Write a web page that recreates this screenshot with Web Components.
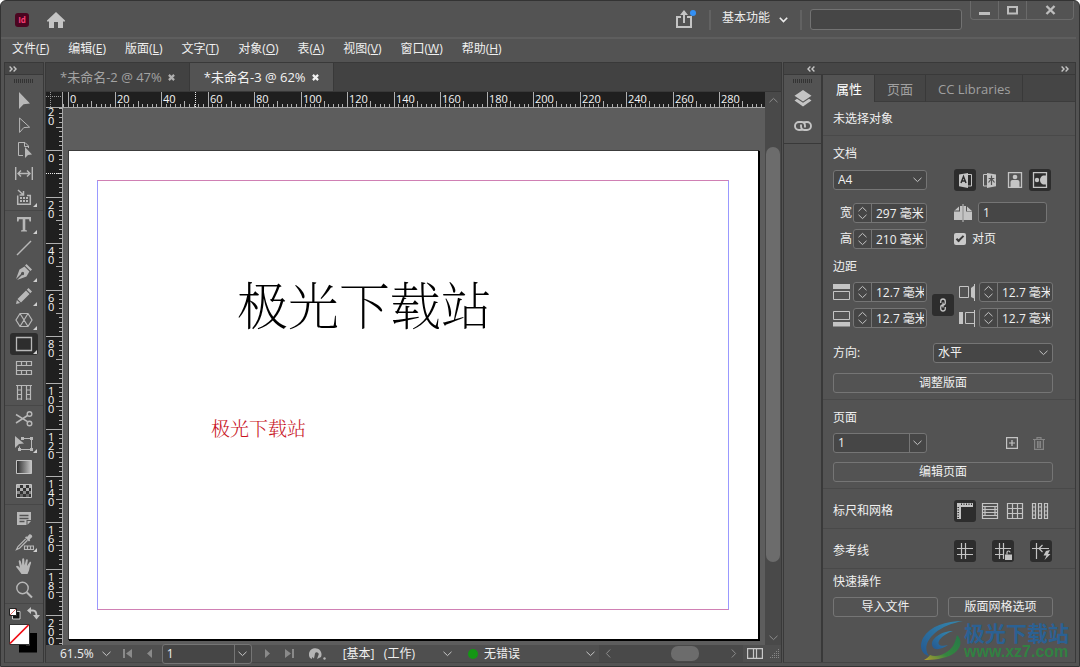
<!DOCTYPE html>
<html lang="zh-CN">
<head>
<meta charset="utf-8">
<title>未命名-3 @ 62%</title>
<style>
html, body { margin: 0; min-height: 100%; background: #fff; }
body {
  font: 12px/16px "Open Sans", "Noto Sans CJK SC", sans-serif;
  color: #f0f0f0;
  --app: #535353; --dark: #424242; --line: #393939; --field: #464646;
  --edge: #757575; --icon: #c4c4c4; --on: #2d2d2d; --ruler: #1f1f1f;
}
</style>
</head>
<body>
<app-window></app-window>
<script>
const BASE = `<style>
*, *::before { box-sizing: border-box; }
button, input, select { font: inherit; color: inherit; margin: 0; border-radius: 0; outline: none; }
button { background: none; border: 0; padding: 0; display: block; }
ui-icon { flex: none; }
</style>`;

function define(name, render) {
  customElements.define(name, class extends HTMLElement {
    constructor() { super(); this.attachShadow({ mode: 'open' }); }
    connectedCallback() {
      const get = (key, other = '') => this.getAttribute(key) ?? other;
      this.shadowRoot.innerHTML = BASE + render(get);
    }
  });
}

/* name: [width, height, markup]; "f" is filled, "s" is stroked */
const ICONS = {
  home: [18, 16, '<path class="f" d="M9 0 18 8.5V9.5H16V16H11V10H7V16H2V9.5H0V8.5Z"/>'],
  share: [22, 18, '<path class="s" stroke-width="2" d="M6 7H2V17H16V7H12"/><path class="f" d="M8 13V5H5L9 0 13 5H10V13Z"/><circle cx="18" cy="3" r="3" fill="#3390f5"/>'],
  down: [9, 6, '<path class="s" d="M.5 .8 4.5 4.6 8.5 .8"/>'],
  downbold: [9, 6, '<path class="s" stroke-width="1.6" d="M.8 .8 4.5 4.6 8.2 .8"/>'],
  up: [9, 6, '<path class="s" d="M.5 5.2 4.5 1.4 8.5 5.2"/>'],
  left: [6, 9, '<path class="s" d="M5.2 .5 1.4 4.5 5.2 8.5"/>'],
  right: [6, 9, '<path class="s" d="M.8 .5 4.6 4.5 .8 8.5"/>'],
  min: [11, 12, '<path class="f" d="M0 8H11V11H0Z"/>'],
  max: [11, 9, '<path class="s" stroke-width="2" d="M1 1H10V7.5H1Z"/>'],
  close: [11, 10, '<path class="s" stroke-width="2.4" d="M1.5 1 9.5 9M9.5 1 1.5 9"/>'],
  x: [7, 7, '<path class="s" stroke-width="2.2" d="M.9 .9 6.1 6.1M6.1 .9 .9 6.1"/>'],
  ffwd: [8, 6, '<path class="s" stroke-width="1.4" d="M.6 .6 3 3 .6 5.4M4.6 .6 7 3 4.6 5.4"/>'],
  rew: [8, 6, '<path class="s" stroke-width="1.4" d="M3.4 .6 1 3 3.4 5.4M7.4 .6 5 3 7.4 5.4"/>'],
  grip: [20, 4, '<path class="s" style="stroke:#333" d="M.5 0V4M2.5 0V4M4.5 0V4M6.5 0V4M8.5 0V4M10.5 0V4M12.5 0V4M14.5 0V4M16.5 0V4M18.5 0V4"/>'],
  select: [20, 20, '<path class="f" d="M5 1V18L9.6 13.2 16 12.6Z"/>'],
  direct: [20, 20, '<path class="s" d="M5.6 3V17.4L9.8 12.6 15.6 12.2Z"/>'],
  pagetool: [20, 20, '<path class="s" d="M9 16.5H4.5V3.5H11L14.5 7V9M10.5 3.5V7.5H14.5"/><path class="f" d="M11 8V19L14 16 18 15.4Z"/>'],
  gap: [20, 20, '<path class="s" stroke-width="1.4" d="M1.7 4V17M18.3 4V17M4 10.5H16M7 7.5 4 10.5 7 13.5M13 7.5 16 10.5 13 13.5"/>'],
  collect: [20, 20, '<path class="s" stroke-width="1.5" d="M3.7 8.5V17.2H16.3V8.5H13M4 3 9 7.5M9.5 4V8H5.5"/><path class="f" d="M6 10h2v2H6zM9 10h2v2H9zM12 10h2v2h-2zM6 13h2v2H6zM9 13h2v2H9zM12 13h2v2h-2z"/>'],
  type: [20, 20, '<path class="f" d="M3 3H17V7.5H15.5L15 5.2H11.3V16L13 16.6V17.5H7V16.6L8.7 16V5.2H5L4.500 7.500H3Z"/>'],
  line: [20, 20, '<path class="s" stroke-width="1.5" d="M3 17 17 3"/>'],
  pen: [20, 20, '<path class="f" d="M12.5 2 18 7.500 16.500 9 11 3.500ZM10.500 4.600 15.400 9.500 12.500 14.500 3 18 8 13A1.600 1.600 0 1 0 7 12L2 17 5.500 7.500Z"/>'],
  pencil: [20, 20, '<path class="f" d="M14.500 2 18 5.500 16.300 7.200 12.800 3.700ZM12 4.500 15.500 8 7 16.500 3.500 13ZM2.900 13.900 6.100 17.100 2 18Z"/>'],
  poly: [20, 20, '<path class="s" stroke-width="1.2" d="M6 3.500H14L18 10 14 16.500H6L2 10ZM6 3.500 14 16.500M14 3.500 6 16.500"/>'],
  rect: [20, 20, '<path class="s" stroke-width="1.3" d="M2.500 3.500H17.500V16.500H2.500Z"/>'],
  hgrid: [20, 20, '<path class="s" stroke-width="1.2" d="M2 3.500H18M2 7.500H18M2 12.500H18M2 16.500H18M2.500 3V17M7.500 3V7.500M12.500 3V7.500M17.500 3V7.500M7.500 12.500V17M12.500 12.500V17M17.500 12.500V17"/>'],
  vgrid: [20, 20, '<path class="s" stroke-width="1.2" d="M2 3.500H18M3.500 3V18M7.500 3V18M12.500 3V18M16.500 3V18M3.500 8H7.500M3.500 12.500H7.500M3.500 17H7.500M12.500 8H16.500M12.500 12.500H16.500M12.500 17H16.500"/>'],
  cut: [20, 20, '<path class="s" stroke-width="1.5" d="M2 5.500 13.500 12.600M2 14 13.500 6.500"/><circle class="s" stroke-width="1.400" cx="15.500" cy="5" r="2.300"/><circle class="s" stroke-width="1.400" cx="15.500" cy="14.500" r="2.300"/>'],
  transform: [22, 20, '<path class="f" d="M2 3V15L6 11 11 10.500Z"/><path class="s" d="M9 5.500H18.500V16.500H6.500V13.500"/><path class="f" d="M17 4h3v3h-3zM17 15h3v3h-3zM5 15h3v3H5zM8 4h3v3H8z"/>'],
  gradient: [20, 20, '<defs><linearGradient id="g"><stop offset="0" stop-color="#2b2b2b"/><stop offset="1" stop-color="#c8c8c8"/></linearGradient></defs><path fill="url(#g)" stroke="#c4c4c4" d="M2.500 3.500H17.500V16.500H2.500Z"/>'],
  feather: [20, 20, '<path fill="#333" stroke="#c4c4c4" d="M2.500 3.500H17.500V16.500H2.500Z"/><path fill="#b0b0b0" d="M3 4h3v3H3zM9 4h3v3H9zM15 4h2v3h-2zM6 7h3v3H6zM12 7h3v3h-3z"/><path fill="#8a8a8a" d="M3 10h3v3H3zM9 10h3v3H9zM15 10h2v3h-2z"/><path fill="#666" d="M6 13h3v3H6zM12 13h3v3h-3z"/>'],
  note: [20, 20, '<path class="f" d="M3 4H17V12H12.500V17H3ZM13.500 13H17L13.500 16.700Z"/><path stroke="#535353" stroke-width="1.300" d="M5.500 7.500H14.500M5.500 10.500H14.500M5.500 13.500H10.500"/>'],
  dropper: [20, 20, '<path class="f" d="M11 5.500 12.300 4.200 13 4.900 15.500 2.300A2.300 2.300 0 0 1 18.200 5L15.600 7.500 16.300 8.200 15 9.500Z"/><path class="s" stroke-width="1.200" d="M11.700 6.800 4 14.500 2.500 17.500 5.500 16.200 13.500 8.300M10.500 14H19.500V17.500H10.500ZM13.500 14V17.500M16.500 14V17.500"/>'],
  hand: [20, 20, '<path class="f" d="M7.500 18C5.500 15.500 4 13 2 10.800 2.500 9.300 4 9.500 6 12L4.700 5.500C4.800 4 6.300 4 6.700 5.300L8 9.500 8.200 3.200C8.500 2 10 2 10.200 3.200L10.600 9.300 12 3.800C12.500 2.700 13.900 3 13.800 4.300L13 10 15.500 6.200C16.400 5.300 17.500 6 17 7.300 16 10 15.500 12.500 15 14.500L13.500 18Z"/>'],
  zoom: [20, 20, '<circle class="s" stroke-width="1.400" cx="8.500" cy="8" r="5.700"/><path class="s" stroke-width="2" d="M12.700 12.200 18 17.500"/>'],
  defaults: [13, 13, '<path fill="#111" d="M5 5H12V12H5Z"/><path fill="none" stroke="#eee" stroke-width=".8" d="M4.500 4.500H12V12H4.500Z"/><path fill="#fff" stroke="#222" d="M1.500 1.500H8.500V8.500H1.500Z"/><path stroke="#d66" d="M2 8 8 2"/>'],
  swap: [13, 13, '<path class="s" stroke-width="1.800" d="M3 3.500H6C8.500 3.500 9.500 5 9.500 9"/><path class="f" d="M4 0V7L0 3.500ZM6 8H13L9.500 12.500Z"/>'],
  swatch: [30, 34, '<path fill="none" stroke="#000" stroke-width="7" d="M13.500 12.500H24.500V25H13.500Z"/><path fill="#fff" stroke="#333" d="M.5 .5H20.500V20.500H.5Z"/><path stroke="#f00a12" stroke-width="1.700" d="M1 19.500 19.500 1"/>'],
  layers: [18, 17, '<path class="f" d="M9 0 17.500 5.700 9 11.400 .5 5.700ZM.5 10.500 3 8.800 9 12.800 15 8.800 17.500 10.500 9 16.500Z"/>'],
  cc: [20, 12, '<path class="s" stroke-width="1.900" d="M10.500 9.300Q9.500 10 6 10A4 4 0 0 1 6 2H8.500Q12 2 12 6V7.500M9.500 2.700Q10.500 2 14 2A4 4 0 0 1 14 10H11.500Q8 10 8 6V4.500"/>'],
  ltr: [22, 22, '<path class="f" d="M5 5.500 14 4V19L5 17.200Z"/><path class="s" d="M14 5.500H17.500V17H14"/><path fill="none" stroke="#2d2d2d" stroke-width="1.500" d="M7 14 9.500 7.500 12 14M8 12H11"/>'],
  rtl: [22, 22, '<path class="s" d="M8 5.500H4.500V17H8"/><path class="f" d="M8 4 17 5.500V17.200L8 19Z"/><path stroke="#535353" stroke-width="1.200" d="M12.500 6.500V16M9.700 9.500H15.300M12.500 9.500 9.500 13.500M12.500 9.500 15.500 13.500"/>'],
  portrait: [22, 22, '<path class="s" stroke-width="1.300" d="M4.500 3.700H17.500V18.300H4.500Z"/><circle class="f" cx="11" cy="8" r="2.300"/><path class="f" d="M6.500 18V13Q6.500 11 8.500 11H13.500Q15.500 11 15.500 13V18Z"/>'],
  landscape: [22, 22, '<path class="s" stroke-width="1.300" d="M4.500 3.700H17.500V18.300H4.500Z"/><circle class="f" cx="8" cy="11" r="2.200"/><path class="f" d="M17 6.500H14Q11 8 11 11T14 15.500H17Z"/>'],
  spread: [18, 18, '<path class="f" d="M0 7 5 2.500V6.500H0M6 2H8.500V16H0V7.500H6ZM9.500 2H12V7.500H18V16H9.500ZM13 2.500 18 7H13Z"/><path class="s" d="M9 0V18"/>'],
  mtop: [17, 17, '<path class="f" d="M0 0H17V5H0Z"/><path class="s" d="M.5 7.500H16.500V15.500H.5Z"/>'],
  mbottom: [17, 17, '<path class="f" d="M0 12H17V16.500H0Z"/><path class="s" d="M.5 1.500H16.500V9.500H.5Z"/>'],
  mright: [17, 17, '<path class="s" d="M.5 2.500H9.500V13.500H.5ZM15.500 0V17"/><path class="f" d="M12 4 16 1V15L12 13Z"/>'],
  mleft: [17, 17, '<path class="f" d="M0 2H4V14H0Z"/><path class="s" d="M6.500 2.500H15.500V13.500H6.500ZM15.500 0V17"/>'],
  chain: [22, 22, '<path class="s" stroke-width="1.300" d="M8.700 9V7.500Q8.700 5 11 5T13.300 7.500V8.500Q13.300 11 11 11M11 8.500V13.500M11 11Q8.700 11 8.700 13.500V14.500Q8.700 17 11 17T13.300 14.500V13"/>'],
  addpage: [12, 12, '<path class="s" stroke-width="1.200" d="M.6 .6H11.400V11.400H.6ZM6 3V9M3 6H9"/>'],
  trash: [12, 13, '<path class="s" style="stroke:#858585" stroke-width="1.200" d="M0 2.500H12M4 2V.6H8V2M1.600 2.500V12.400H10.400V2.500M4.500 4V11M7.500 4V11M6 4V11"/>'],
  rulers: [22, 22, '<path class="f" d="M3 3H19V7H7V19H3Z"/><path stroke="#2d2d2d" d="M7.500 3.500V5M10 3.500V5M12.500 3.500V5M15 3.500V5M17.500 3.500V5M3.500 7.500H5M3.500 10H5M3.500 12.500H5M3.500 15H5M3.500 17.500H5"/>'],
  baseline: [22, 22, '<path class="s" stroke-width="1.200" d="M3.500 3.500H18.500V18.500H3.500ZM3 6.500H19M3 9.500H19M3 12.500H19M3 15.500H19M6 6.500V15.500M16 6.500V15.500"/>'],
  docgrid: [22, 22, '<path class="s" stroke-width="1.200" d="M3.500 3.500H18.500V18.500H3.500ZM3 8.500H19M3 13.500H19M8.500 3V19M13.500 3V19"/>'],
  layout: [22, 22, '<path class="s" stroke-width="1.200" d="M3.500 3.500H6.500V18.500H3.500ZM9.500 3.500H12.500V18.500H9.500ZM15.500 3.500H18.500V18.500H15.500ZM3.500 7H6.500M3.500 11H6.500M3.500 15H6.500M9.500 7H12.500M9.500 11H12.500M9.500 15H12.500M15.500 7H18.500M15.500 11H18.500M15.500 15H18.500"/>'],
  guides: [22, 22, '<path class="s" stroke-width="1.200" d="M3 8.500H19M3 14.500H19M7.500 3V19M11.500 3V19"/>'],
  lockguides: [22, 22, '<path class="s" stroke-width="1.200" d="M3 8.500H19M3 14.500H12M7.500 3V19M11.500 3V19M15 14.500V12.500Q15 11 16.500 11T18 12.500"/><path class="f" d="M13 14.500H20V20H13Z"/>'],
  smart: [22, 22, '<path class="s" stroke-width="1.200" d="M2 8.500H19M6.500 3V19M12.500 5 9 8.500 12.500 12"/><path class="f" d="M16 11 20 10 18 14H20.500L14.500 20 16.500 15.500H13.500Z"/>'],
  first: [9, 9, '<path class="f" d="M0 0H2V9H0ZM9 0V9L3 4.500Z"/>'],
  prev: [5, 9, '<path class="f" d="M5 0V9L0 4.500Z"/>'],
  next: [5, 9, '<path class="f" d="M0 0V9L5 4.500Z"/>'],
  last: [9, 9, '<path class="f" d="M7 0H9V9H7ZM0 0V9L6 4.500Z"/>'],
  preflight: [17, 13, '<path class="f" d="M1 11A6.300 6.300 0 1 1 12 10L8 12 9.500 8A1.800 1.800 0 1 0 6 6.500L5 11.500 3 10V12Z"/><circle class="f" cx="15.500" cy="11.500" r="1.200"/>'],
  split: [16, 11, '<path class="s" stroke-width="1.200" d="M.6 .6H15.400V10.400H.6ZM6.500 .6V10.400M9.500 .6V10.400"/>'],
  size: [10, 10, '<path fill="#888" d="M8 0h1v1H8zM6 2h1v1H6zM8 2h1v1H8zM4 4h1v1H4zM6 4h1v1H6zM8 4h1v1H8zM2 6h1v1H2zM4 6h1v1H4zM6 6h1v1H6zM8 6h1v1H8zM0 8h1v1H0zM2 8h1v1H2zM4 8h1v1H4zM6 8h1v1H6zM8 8h1v1H8z"/>'],
};

define('ui-icon', get => {
  const [w, h, body] = ICONS[get('name')];
  return `<style>:host { display: block; width: ${w}px; height: ${h}px; color: var(--tint, var(--icon)); }
    svg { display: block; } .f { fill: currentColor; } .s { fill: none; stroke: currentColor; }</style>
    <svg width="${w}" height="${h}" viewBox="0 0 ${w} ${h}" aria-hidden="true">${body}</svg>`;
});

define('ui-button', () => `<style>
  :host { display: block; flex: 1; }
  button { width: 100%; height: 20px; border: 1px solid var(--edge); border-radius: 3px; line-height: 18px; }
  </style><button type="button"><slot></slot></button>`);

define('icon-button', get => `<style>
  :host { display: block; }
  button { width: 22px; height: 22px; border-radius: 3px; display: grid; place-items: center; }
  button[aria-pressed=true] { background: var(--on); }
  </style><button type="button" aria-label="${get('label')}" aria-pressed="${get('on', null) !== null}"><ui-icon name="${get('name')}"></ui-icon></button>`);

define('ui-select', get => `<style>
  :host { display: flex; align-items: center; justify-content: space-between; }
  .box { display: grid; width: var(--w, 94px); align-items: center; }
  select, ui-icon { grid-area: 1 / 1; }
  select { appearance: none; width: 100%; height: 20px; padding: 0 20px 0 4px; background: var(--field);
    border: 1px solid var(--edge); border-radius: 3px; }
  ui-icon { justify-self: end; margin-right: 5px; pointer-events: none; }
  .split { justify-self: end; grid-area: 1 / 1; width: 18px; height: 20px; border-left: 1px solid var(--edge); pointer-events: none; }
  </style>
  ${get('label') ? `<label for="s">${get('label')}</label>` : ''}
  <span class="box"><select id="s" aria-label="${get('label') || get('hint')}">${get('options').split('|').map(o => `<option>${o}</option>`).join('')}</select>
  ${get('split', null) !== null ? '<span class="split"></span>' : ''}<ui-icon name="down"></ui-icon></span>`);

define('ui-spin', get => `<style>
  :host { display: flex; align-items: center; justify-content: space-between; width: 94px; }
  label { display: flex; justify-content: flex-end; width: 19px; }
  :host([icon]) label { justify-content: flex-start; }
  .box { display: flex; width: 74px; height: 20px; border: 1px solid var(--edge); border-radius: 3px; background: var(--field); }
  .steps { width: 18px; flex: none; border-right: 1px solid var(--edge); display: flex; flex-direction: column; align-items: center; justify-content: space-between; padding: 2px 0; }
  input { flex: 1; min-width: 0; width: 0; border: 0; background: none; padding: 0 2px 0 4px; height: 18px; }
  </style>
  <label for="i">${get('icon') ? `<ui-icon name="${get('icon')}"></ui-icon>` : get('label')}</label>
  <span class="box"><span class="steps"><button type="button" tabindex="-1" aria-label="增加"><ui-icon name="up"></ui-icon></button><button type="button" tabindex="-1" aria-label="减少"><ui-icon name="down"></ui-icon></button></span>
  <input id="i" type="text" aria-label="${get('label')}" value="${get('value')}"></span>`);

define('title-bar', () => `<style>
  :host { display: flex; align-items: flex-start; height: 38px; padding: 0 2px 0 14px; border-bottom: 2px solid #5e5e5e; margin-right: 3px; }
  .logo { margin-top: 12px; width: 14px; height: 14px; border-radius: 3px; background: #4b0520; color: #f43c72; font-weight: 700; font-size: 8px; line-height: 13px; text-align: center; }
  .home { margin: 11px auto 0 18px; }
  .share { margin: 9px 12px 0 0; }
  i { width: 2px; height: 20px; margin-top: 9px; background: #626262; }
  .space { display: flex; align-items: center; gap: 9px; margin: 7px 12px 0 11px; height: 20px; --tint: #ececec; color: #ececec; }
  .space ui-icon { margin-top: 4px; }
  input { width: 152px; height: 21px; margin: 8px 8px 0 8px; background: var(--field); border: 1px solid #727272; border-radius: 3px; }
  .win { display: flex; height: 19px; border: 1px solid #6a6a6a; border-top: 0; border-radius: 0 0 4px 4px; --tint: #bdbdbd; }
  .win button { width: 28px; display: grid; place-items: center; border-right: 1px solid #6a6a6a; }
  .win button:last-child { width: 46px; border: 0; }
  </style>
  <span class="logo">Id</span>
  <button class="home" aria-label="主页"><ui-icon name="home"></ui-icon></button>
  <button class="share" aria-label="共享"><ui-icon name="share"></ui-icon></button>
  <i></i>
  <button class="space"><span>基本功能</span><ui-icon name="downbold"></ui-icon></button>
  <i></i>
  <input type="search" aria-label="搜索">
  <span class="win"><button aria-label="最小化"><ui-icon name="min"></ui-icon></button><button aria-label="最大化"><ui-icon name="max"></ui-icon></button><button aria-label="关闭"><ui-icon name="close"></ui-icon></button></span>`);

define('menu-bar', () => `<style>
  :host { display: block; height: 23px; }
  nav { display: flex; gap: 19px; padding: 2px 0 0 11px; }
  u { text-underline-offset: 1px; }
  </style><nav>${[['文件', 'F'], ['编辑', 'E'], ['版面', 'L'], ['文字', 'T'], ['对象', 'O'], ['表', 'A'], ['视图', 'V'], ['窗口', 'W'], ['帮助', 'H']]
    .map(([t, k]) => `<button type="button" accesskey="${k.toLowerCase()}">${t}(<u>${k}</u>)</button>`).join('')}</nav>`);

const TOOLS = [
  ['select', 'direct', 'pagetool', 'gap', 'collect*'],
  ['type*', 'line', 'pen*', 'pencil*', 'poly*', 'rect*!', 'hgrid', 'vgrid'],
  ['cut', 'transform*', 'gradient', 'feather'],
  ['note', 'dropper*', 'hand', 'zoom'],
];
define('tool-box', () => `<style>
  :host { display: flex; flex-direction: column; border: 1px solid var(--line); border-bottom-color: #444; background: var(--app); }
  header { height: 12px; background: #464646; border-bottom: 1px solid var(--line); padding: 3px 0 0 4px; box-sizing: border-box; }
  .grip { margin: 4px auto 6px; }
  section { display: flex; flex-direction: column; align-items: center; border-bottom: 1px solid #474747; padding-bottom: 1px; margin-bottom: 1px; }
  section button { position: relative; width: 28px; height: 22px; margin: 1px 0; display: grid; place-items: center; border-radius: 3px; --tint: #b8b8b8; }
  section button.on { background: var(--on); }
  section button.more::before { content: ""; position: absolute; right: 1px; bottom: 1px; border: 2px solid #d0d0d0; border-top-color: transparent; border-left-color: transparent; }
  .row { display: flex; justify-content: center; gap: 6px; height: 17px; padding-top: 2px; }
  .swatch { margin: 2px auto 0 4px; }
  </style>
  <header><ui-icon name="ffwd"></ui-icon></header>
  <ui-icon class="grip" name="grip"></ui-icon>
  ${TOOLS.map(group => `<section>${group.map(t => {
    const n = t.replace(/[*!]/g, '');
    return `<button type="button" aria-label="${n}" class="${t.includes('*') ? 'more' : ''} ${t.includes('!') ? 'on' : ''}"><ui-icon name="${n}"></ui-icon></button>`;
  }).join('')}</section>`).join('')}
  <div class="row"><ui-icon name="defaults"></ui-icon><ui-icon name="swap"></ui-icon></div>
  <ui-icon class="swatch" name="swatch"></ui-icon>`);

/* Rulers: 20 mm between labelled ticks */
const STEP = 46.5;
define('page-ruler', get => {
  const vertical = get('axis') === 'y';
  const origin = Number(get('origin'));
  const size = vertical ? 16 : 15;
  let ticks = '', labels = '';
  for (let mm = -40; mm <= 800; mm += 2) {
    const p = Math.floor(origin + mm * STEP / 20) + .5;
    if (p < 0) continue;
    const len = mm % 20 === 0 ? size : mm % 10 === 0 ? 6 : 3;
    ticks += vertical ? `M${size - len} ${p}H${size}` : `M${p} ${size - len}V${size}`;
  }
  for (let mm = vertical ? -20 : 0; mm <= (vertical ? 200 : 280); mm += 20) {
    const p = Math.floor(origin + mm * STEP / 20);
    const digits = [...String(Math.abs(mm))];
    labels += vertical
      ? `<text x="${digits.map(() => 2).join(' ')}" y="${digits.map((d, i) => p + 12 + i * 9).join(' ')}">${digits.join('')}</text>`
      : `<text x="${p + 2}" y="11">${mm}</text>`;
  }
  const m = get('mark');
  return `<style>
    :host { display: block; background: var(--ruler); overflow: hidden; ${vertical ? 'border-right: 1px solid #a8a8a8; width: 17px' : 'border-bottom: 1px solid #a8a8a8; height: 16px'}; box-sizing: border-box; contain: size; }
    svg { display: block; width: 100%; height: 100%; }
    path { fill: none; stroke: #b0b0b0; shape-rendering: crispEdges; }
    .mark { stroke: #eee; stroke-dasharray: 1 1; }
    text { fill: #f4f4f4; font-size: 11px; }
    </style><svg><path d="${ticks}"/>${labels}<path class="mark" d="${vertical ? `M0 ${m}.5H16` : `M${m}.5 0V15`}"/></svg>`;
});

define('page-canvas', () => `<style>
  :host { display: flex; background: #5d5d5d; padding: 42px 6px 5px 5px; }
  .page { flex: 1; position: relative; display: flex; background: #fff; border: 1px solid #3c3c3c; border-right-color: #000; border-bottom-color: #000; box-shadow: 1px 1px #000; padding: 29px 29px 29px 28px; }
  .guides { flex: 1; border: 1px solid #9999ff; border-top-color: #d080b4; border-bottom-color: #d080b4; }
  .frame { position: absolute; white-space: nowrap; font-family: "Noto Serif CJK SC", "Noto Sans CJK SC", serif; }
  .big { left: 168px; top: 122px; font-size: 51px; line-height: 60px; font-weight: 200; color: #000; }
  .small { left: 142px; top: 265px; font-size: 19px; line-height: 24px; font-weight: 300; color: #c8141e; }
  </style>
  <div class="page"><div class="guides"></div><div class="frame big">极光下载站</div><div class="frame small">极光下载站</div></div>`);

define('status-bar', () => `<style>
  :host { display: flex; align-items: center; height: 17px; background: #4f4f4f; --tint: #c8c8c8; }
  .zoom { display: flex; align-items: center; gap: 8px; margin: 0 12px 0 14px; }
  .nav { display: flex; gap: 15px; --tint: #8a8a8a; }
  ui-select { --w: 90px; margin: 0 13px 0 10px; }
  .pre { margin: 0 17px 0 15px; --tint: #b5b5b5; }
  .profile { margin-right: 28px; white-space: pre; }
  .dot { width: 10px; height: 10px; border-radius: 5px; background: #149614; margin: 0 6px 0 16px; }
  .err { flex: 1; display: flex; align-items: center; justify-content: space-between; padding-right: 4px; white-space: nowrap; }
  .scroll { width: 144px; height: 17px; background: #494949; display: flex; align-items: center; padding: 0 6px; --tint: #8c8c8c; }
  .thumb { width: 28px; height: 15px; border-radius: 7px; background: #6c6c6c; margin: 0 32px 0 auto; }
  .split { margin: 0 7px 0 4px; } .size { margin-right: 1px; }
  </style>
  <button class="zoom"><span>61.5%</span><ui-icon name="down"></ui-icon></button>
  <span class="nav"><button aria-label="首页"><ui-icon name="first"></ui-icon></button><button aria-label="上一页"><ui-icon name="prev"></ui-icon></button></span>
  <ui-select hint="当前页" options="1" split></ui-select>
  <span class="nav"><button aria-label="下一页"><ui-icon name="next"></ui-icon></button><button aria-label="末页"><ui-icon name="last"></ui-icon></button></span>
  <button class="pre" aria-label="打开"><ui-icon name="preflight"></ui-icon></button>
  <span class="profile">[基本]   (工作)</span>
  <button aria-label="印前检查"><ui-icon name="down"></ui-icon></button>
  <span class="dot"></span>
  <button class="err"><span>无错误</span><ui-icon name="down"></ui-icon></button>
  <span class="scroll"><ui-icon name="left"></ui-icon><span class="thumb"></span><ui-icon name="right"></ui-icon></span>
  <ui-icon class="split" name="split"></ui-icon><ui-icon class="size" name="size"></ui-icon>`);

define('document-area', () => `<style>
  :host { display: grid; grid-template: 29px 16px minmax(0, 1fr) 17px / 17px minmax(0, 1fr) 16px; border: 1px solid var(--line); border-bottom-color: #444; background: var(--dark); }
  .tabs { grid-column: 1 / -1; display: flex; border-bottom: 1px solid #383838; font-size: 13px; }
  .tabs button { display: flex; align-items: center; gap: 6px; padding: 0 14px; border-right: 1px solid var(--line); color: #a3a3a3; --tint: #b0b0b0; white-space: nowrap; }
  .tabs button[aria-selected=true] { background: var(--app); color: #f2f2f2; --tint: #f2f2f2; }
  .corner { background: var(--ruler); border: solid #a8a8a8; border-width: 0 1px 1px 0; background-image: linear-gradient(90deg, #999 50%, transparent 0), linear-gradient(#999 50%, transparent 0); background-size: 2px 1px, 1px 2px; background-repeat: repeat-x, repeat-y; background-position: 0 4px, 4px 0; }
  .vscroll { grid-area: 2 / 3 / 4 / 4; background: #494949; display: flex; flex-direction: column; align-items: center; padding: 5px 0 4px; --tint: #8c8c8c; }
  .thumb { width: 14px; height: 415px; border-radius: 7px; background: #6c6c6c; margin: 44px 0 auto; }
  status-bar { grid-column: 1 / -1; }
  </style>
  <div class="tabs" role="tablist"><button role="tab" aria-selected="false"><span>*未命名-2 @ 47%</span><ui-icon name="x"></ui-icon></button><button role="tab" aria-selected="true"><span>*未命名-3 @ 62%</span><ui-icon name="x"></ui-icon></button></div>
  <div class="corner"></div>
  <page-ruler axis="x" origin="5.5" mark="132"></page-ruler>
  <page-ruler axis="y" origin="42.5" mark="65"></page-ruler>
  <page-canvas></page-canvas>
  <div class="vscroll"><ui-icon name="up"></ui-icon><span class="thumb"></span><ui-icon name="down"></ui-icon></div>
  <status-bar></status-bar>`);

define('icon-dock', () => `<style>
  :host { display: flex; flex-direction: column; align-items: center; border-right: 2px solid var(--line); }
  .grip { margin: 4px 0 7px; }
  .group { width: 100%; display: flex; flex-direction: column; align-items: center; border-bottom: 1px solid var(--line); padding-bottom: 11px; }
  .group button + button { margin-top: 13px; }
  </style><div class="group"><ui-icon class="grip" name="grip"></ui-icon>
  <button aria-label="图层"><ui-icon name="layers"></ui-icon></button><button aria-label="链接"><ui-icon name="cc"></ui-icon></button></div>`);

define('properties-panel', () => `<style>
  :host { display: block; }
  .tabs { display: flex; height: 27px; background: #454545; }
  .tabs button { padding: 1px 12px 0; border-right: 1px solid var(--line); border-bottom: 1px solid #3c3c3c; color: #a0a0a0; font-size: 13px; }
  .tabs button[aria-selected=true] { background: var(--app); color: #fff; border-bottom: 0; padding: 0 12px 0 13px; }
  .tabs span { flex: 1; border-bottom: 1px solid #3c3c3c; }
  section { padding: 0 22px 0 10px; border-bottom: 1px solid #494949; display: flex; flex-direction: column; }
  section:last-of-type { border: 0; }
  h3 { font: inherit; margin: 0; }
  .cols { display: grid; grid-template-columns: 1fr 99px; align-items: center; }
  .set { display: flex; gap: 3px; } .set.wide { gap: 16px; }
  .count { display: flex; gap: 6px; align-items: center; }
  .count input { width: 69px; height: 21px; padding: 0 4px; background: var(--field); border: 1px solid var(--edge); border-radius: 3px; }
  .facing { display: flex; gap: 6px; align-items: center; }
  .facing input { appearance: none; width: 12px; height: 12px; background: #cacaca; border-radius: 2px; display: grid; place-items: center; }
  .facing input::before { content: ""; width: 8px; height: 4px; border: solid #3a3a3a; border-width: 0 0 2px 2px; rotate: -45deg; translate: 0 -1px; }
  .margins { display: grid; grid-template-columns: 94px 1fr 94px; row-gap: 6px; align-items: center; justify-items: center; }
  .margins icon-button { grid-area: 1 / 2 / 3 / 3; background: var(--on); border-radius: 3px; }
  .top { height: 34px; padding-top: 1px; justify-content: center; }
  .pages { display: flex; align-items: center; gap: 15px; } .pages ui-select { margin-right: auto; }
  .pages button:last-child { margin-right: 8px; }
  .quick { display: flex; gap: 10px; }
  .doc { padding-top: 10px; padding-bottom: 6px; } .page { padding-top: 10px; padding-bottom: 6px; }
  .view { padding-top: 11px; padding-bottom: 6px; } .fast { padding-top: 5px; }
  </style>
  <div class="tabs" role="tablist"><button role="tab" aria-selected="true">属性</button><button role="tab">页面</button><button role="tab">CC Libraries</button><span></span></div>
  <section class="top"><h3>未选择对象</h3></section>
  <section class="doc">
    <h3>文档</h3>
    <div class="cols" style="margin-top:7px">
      <ui-select hint="页面大小" options="A4"></ui-select>
      <span class="set"><icon-button name="ltr" label="从左到右装订" on></icon-button><icon-button name="rtl" label="从右到左装订"></icon-button><icon-button name="portrait" label="纵向"></icon-button><icon-button name="landscape" label="横向" on></icon-button></span>
    </div>
    <div class="cols" style="margin-top:11px">
      <ui-spin label="宽" value="297 毫米"></ui-spin>
      <label class="count"><ui-icon name="spread"></ui-icon><input type="text" value="1" aria-label="页数"></label>
    </div>
    <div class="cols" style="margin-top:6px">
      <ui-spin label="高" value="210 毫米"></ui-spin>
      <label class="facing"><input type="checkbox" checked>对页</label>
    </div>
    <h3 style="margin-top:10px">边距</h3>
    <div class="margins" style="margin-top:7px">
      <ui-spin icon="mtop" label="上边距" value="12.7 毫米"></ui-spin><icon-button name="chain" label="链接边距"></icon-button><ui-spin icon="mright" label="外边距" value="12.7 毫米"></ui-spin>
      <ui-spin icon="mbottom" label="下边距" value="12.7 毫米"></ui-spin><ui-spin icon="mleft" label="内边距" value="12.7 毫米"></ui-spin>
    </div>
    <ui-select style="--w:120px;margin:15px 0 10px" label="方向:" options="水平|垂直"></ui-select>
    <ui-button>调整版面</ui-button>
  </section>
  <section class="page">
    <h3>页面</h3>
    <div class="pages" style="margin:7px 0 9px">
      <ui-select hint="页面" options="1" split></ui-select>
      <button aria-label="添加页面"><ui-icon name="addpage"></ui-icon></button><button aria-label="删除页面"><ui-icon name="trash"></ui-icon></button>
    </div>
    <ui-button>编辑页面</ui-button>
  </section>
  <section class="view">
    <div class="cols"><h3>标尺和网格</h3><span class="set"><icon-button name="rulers" label="标尺" on></icon-button><icon-button name="baseline" label="基线网格"></icon-button><icon-button name="docgrid" label="文档网格"></icon-button><icon-button name="layout" label="版面网格"></icon-button></span></div>
  </section>
  <section class="view">
    <div class="cols"><h3>参考线</h3><span class="set wide"><icon-button name="guides" label="参考线" on></icon-button><icon-button name="lockguides" label="锁定参考线" on></icon-button><icon-button name="smart" label="智能参考线" on></icon-button></span></div>
  </section>
  <section class="fast">
    <h3>快速操作</h3>
    <div class="quick" style="margin-top:7px"><ui-button>导入文件</ui-button><ui-button>版面网格选项</ui-button></div>
  </section>`);

define('side-area', () => `<style>
  :host { display: grid; grid-template: 12px 1fr / 39px 1fr; border: 1px solid var(--line); border-bottom-color: #444; background: var(--app); }
  header { grid-column: 1 / -1; display: flex; justify-content: space-between; align-items: center; padding: 0 6px 0 23px; background: #464646; border-bottom: 1px solid var(--line); }
  </style><header><ui-icon name="rew"></ui-icon><ui-icon name="ffwd"></ui-icon></header>
  <icon-dock></icon-dock><properties-panel></properties-panel>`);

define('site-mark', () => `<style>
  :host { display: flex; align-items: center; gap: 1px; opacity: .85; pointer-events: none; }
  svg { display: block; }
  span { display: block; font-weight: 700; white-space: nowrap; }
  .cn { font-size: 21px; line-height: 22px; color: #25649f; font-family: "Noto Sans CJK SC", sans-serif; }
  .url { font: 700 16px/18px "Liberation Sans", sans-serif; color: #2c8a40; }
  </style>
  <svg width="43" height="40" viewBox="0 0 43 40"><defs><linearGradient id="b" x1="0" y1="1" x2="1" y2="0"><stop offset="0" stop-color="#1d5a9c"/><stop offset="1" stop-color="#2f93c0"/></linearGradient><linearGradient id="c" x1="0" y1="1" x2="1" y2="0"><stop offset="0" stop-color="#c9a92c"/><stop offset=".4" stop-color="#2f8f3c"/><stop offset="1" stop-color="#1f8048"/></linearGradient></defs>
  <path fill="url(#b)" d="M43 0C26 0 10 5 3 17-1 25 1 33 9 35 4 28 6 20 15 12 22 6 32 2 43 0Z"/><path fill="url(#b)" d="M33 10C22 10 11 17 12 24 13 30 21 29 28 24 21 26 17 24 19 20 21 16 27 12 33 10Z"/><path fill="url(#c)" d="M37 14C43 20 41 28 33 33 25 38 12 39 4 39 7 37 9 36 10 34 18 37 28 32 33 25 35 21 36 18 37 14Z"/></svg>
  <div><span class="cn">极光下载站</span><span class="url">www.xz7.com</span></div>`);

define('app-window', () => `<style>
  :host { display: flex; flex-direction: column; position: relative; min-height: 100vh; box-sizing: border-box; background: var(--app); border: 1px solid #333; border-radius: 6px 6px 0 0; overflow: hidden; }
  main { flex: 1; display: grid; grid-template-columns: 40px minmax(0, 1fr) 293px; gap: 1px; padding: 0 3px 3px 3px; }
  site-mark { position: absolute; right: 10px; bottom: 5px; }
  </style>
  <title-bar></title-bar><menu-bar></menu-bar>
  <main><tool-box></tool-box><document-area></document-area><side-area></side-area></main>
  <site-mark></site-mark>`);
</script>
</body>
</html>
